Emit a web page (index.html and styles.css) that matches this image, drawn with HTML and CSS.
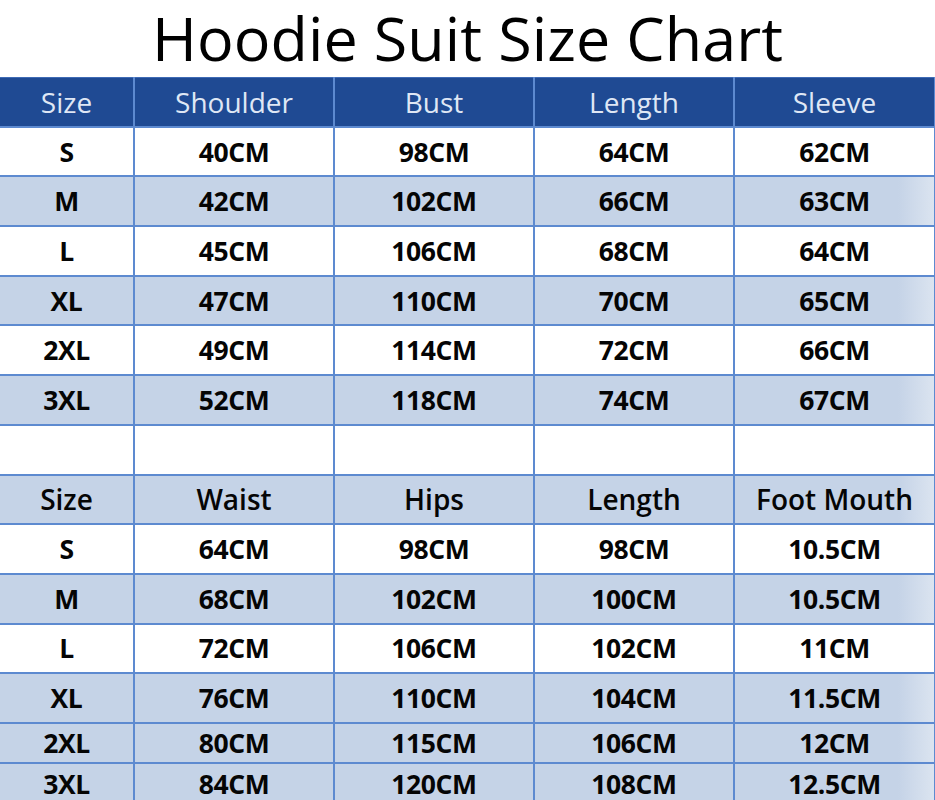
FILE: index.html
```html
<!DOCTYPE html>
<html>
<head>
<meta charset="utf-8">
<link rel="stylesheet" href="styles.css">
</head>
<body>
<div class="page">
  <h1 class="title">Hoodie Suit Size Chart</h1>
  <table class="chart">
    <colgroup>
      <col class="c-size"><col class="c-val"><col class="c-val"><col class="c-val"><col class="c-last">
    </colgroup>
    <tr class="head"><td>Size</td><td>Shoulder</td><td>Bust</td><td>Length</td><td>Sleeve</td></tr>
    <tr><td>S</td><td>40CM</td><td>98CM</td><td>64CM</td><td>62CM</td></tr>
    <tr class="shade"><td>M</td><td>42CM</td><td>102CM</td><td>66CM</td><td>63CM</td></tr>
    <tr><td>L</td><td>45CM</td><td>106CM</td><td>68CM</td><td>64CM</td></tr>
    <tr class="shade"><td>XL</td><td>47CM</td><td>110CM</td><td>70CM</td><td>65CM</td></tr>
    <tr><td>2XL</td><td>49CM</td><td>114CM</td><td>72CM</td><td>66CM</td></tr>
    <tr class="shade"><td>3XL</td><td>52CM</td><td>118CM</td><td>74CM</td><td>67CM</td></tr>
    <tr class="blank"><td></td><td></td><td></td><td></td><td></td></tr>
    <tr class="shade sub"><td>Size</td><td>Waist</td><td>Hips</td><td>Length</td><td>Foot Mouth</td></tr>
    <tr><td>S</td><td>64CM</td><td>98CM</td><td>98CM</td><td>10.5CM</td></tr>
    <tr class="shade"><td>M</td><td>68CM</td><td>102CM</td><td>100CM</td><td>10.5CM</td></tr>
    <tr><td>L</td><td>72CM</td><td>106CM</td><td>102CM</td><td>11CM</td></tr>
    <tr class="shade"><td>XL</td><td>76CM</td><td>110CM</td><td>104CM</td><td>11.5CM</td></tr>
    <tr class="shade short"><td>2XL</td><td>80CM</td><td>115CM</td><td>106CM</td><td>12CM</td></tr>
    <tr class="shade short"><td>3XL</td><td>84CM</td><td>120CM</td><td>108CM</td><td>12.5CM</td></tr>
  </table>
</div>
</body>
</html>
```

FILE: styles.css
```css
html, body {
  margin: 0;
  padding: 0;
  background: #ffffff;
}
body {
  width: 935px;
  height: 800px;
  overflow: hidden;
  font-family: "Open Sans", "Liberation Sans", sans-serif;
}
.page {
  display: flex;
  flex-direction: column;
}
.title {
  margin: 0;
  padding: 0 0 2px;
  text-align: center;
  font-family: "Open Sans", sans-serif;
  font-weight: 400;
  font-size: 61px;
  line-height: 75px;
  color: #000000;
  letter-spacing: 0.1px;
  white-space: nowrap;
}
.chart {
  border-collapse: collapse;
  table-layout: fixed;
  width: 935px;
}
.c-size { width: 134px; }
.c-val { width: 200px; }
.c-last { width: 201px; }
.chart td {
  border: 2px solid #5d8ad0;
  text-align: center;
  vertical-align: middle;
  height: 47.7px;
  padding: 0;
  font-weight: 700;
  font-size: 26.5px;
  color: #050505;
  background: #ffffff;
  letter-spacing: -0.4px;
}
.chart td:first-child { border-left: none; }
.chart tr.shade td { background: #c5d3e7; }
.chart tr.shade td:last-child {
  background: linear-gradient(to right, #c5d3e7 82%, #dbe4f0 100%);
}
.chart tr.head td {
  background: #1f4a93;
  color: #dfe7f5;
  font-weight: 400;
  font-size: 28px;
  letter-spacing: 0;
  border-top: 1px solid #3f6bb5;
}
.chart tr.sub td {
  font-size: 28px;
  font-weight: 600;
  letter-spacing: 0;
}
.chart tr.short td { height: 38.5px; }
```
